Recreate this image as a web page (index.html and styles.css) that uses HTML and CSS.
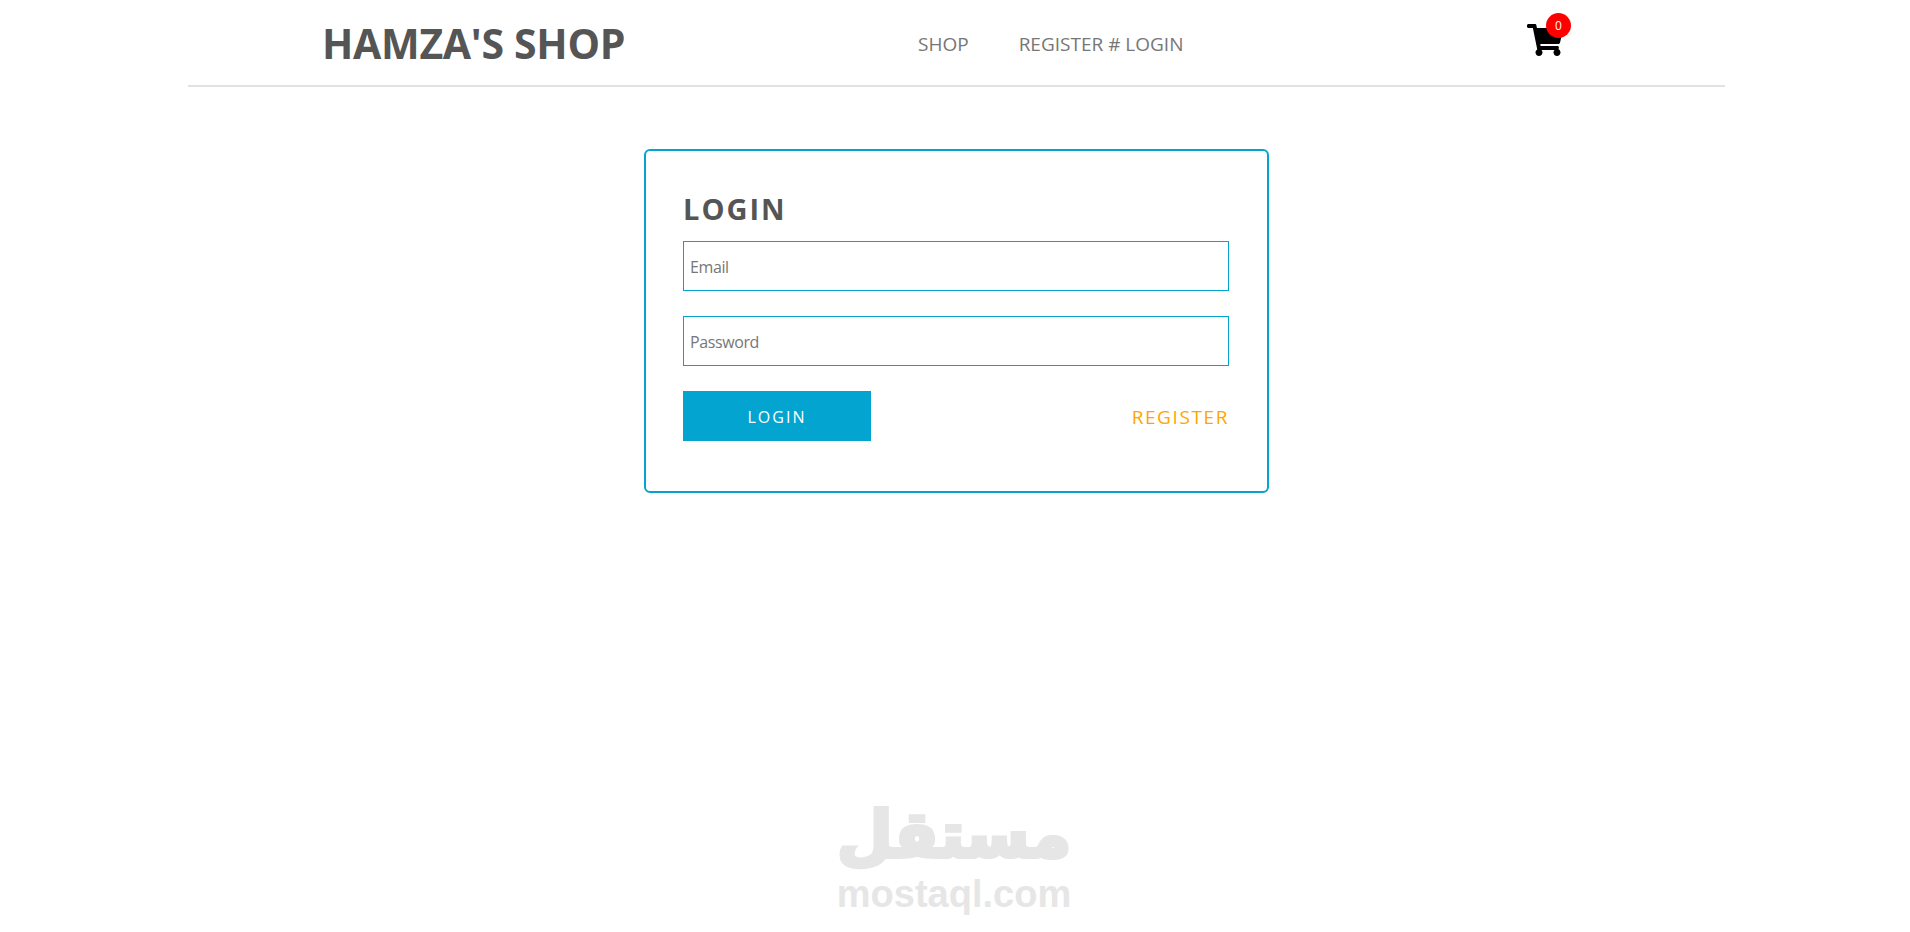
FILE: index.html
```html
<!DOCTYPE html>
<html lang="en">
  <head>
    <meta charset="UTF-8" />
    <meta name="viewport" content="width=device-width, initial-scale=1.0" />
    <title>Login | Hamza's Shop</title>
    <link rel="stylesheet" href="styles.css">
  </head>
  <body>
    <header class="header">
      <a class="logo" href="#">HAMZA'S SHOP</a>
      <nav class="nav">
        <a href="#">SHOP</a>
        <a href="#">REGISTER # LOGIN</a>
      </nav>
      <a class="cart" href="#">
        <svg class="cart-icon" viewBox="0 0 576 512" aria-hidden="true">
          <path d="M528.12 301.319l47.273-208C578.806 78.301 567.391 64 551.99 64H159.208l-9.166-44.81C147.758 8.021 137.93 0 126.529 0H24C10.745 0 0 10.745 0 24v16c0 13.255 10.745 24 24 24h69.883l70.248 343.435C147.325 417.1 136 435.222 136 456c0 30.928 25.072 56 56 56s56-25.072 56-56c0-15.674-6.447-29.835-16.824-40h209.647C430.447 426.165 424 440.326 424 456c0 30.928 25.072 56 56 56s56-25.072 56-56c0-22.172-12.888-41.332-31.579-50.405l5.517-24.276c3.413-15.018-8.002-29.319-23.403-29.319H218.117l-6.545-32h293.145c11.206 0 20.92-7.754 23.403-18.681z"/>
        </svg>
        <span class="badge">0</span>
      </a>
    </header>

    <main class="main">
      <form class="card">
        <h2>LOGIN</h2>
        <input type="email" placeholder="Email" />
        <input type="password" placeholder="Password" />
        <div class="actions">
          <button type="button" class="btn">LOGIN</button>
          <a class="register" href="#">REGISTER</a>
        </div>
      </form>
    </main>

    <div class="watermark">
      <span class="watermark-ar" lang="ar" dir="rtl">مستقل</span>
      <span class="watermark-en">mostaql.com</span>
    </div>
  </body>
</html>
```

FILE: styles.css
```css
* {
  margin: 0;
  padding: 0;
  box-sizing: border-box;
  font-family: "Open Sans", sans-serif;
}
body {
  background-color: #ffffff;
  color: #555555;
  height: 932px;
  overflow: hidden;
  position: relative;
}
a {
  text-decoration: none;
}
.header {
  margin-left: 188px;
  width: 1537px;
  height: 87px;
  padding-left: 134px;
  border-bottom: 2px solid #e2e2e2;
  display: flex;
  align-items: center;
}
.logo {
  width: 596px;
  font-size: 41px;
  font-weight: 700;
  color: #555555;
  letter-spacing: -0.3px;
}
.nav {
  width: 609px;
  padding-top: 2px;
  display: flex;
  gap: 50px;
}
.nav a {
  font-size: 19px;
  color: #777777;
}
.cart {
  position: relative;
  display: block;
  width: 36px;
  height: 32px;
  margin-top: -6px;
}
.cart-icon {
  display: block;
  width: 36px;
  height: 32px;
  fill: #000000;
}
.badge {
  position: absolute;
  top: -11px;
  left: 19px;
  width: 25px;
  height: 25px;
  border-radius: 50%;
  background: #ff0000;
  color: #ffffff;
  font-size: 12px;
  line-height: 25px;
  text-align: center;
}
.main {
  margin-left: 644px;
  padding-top: 62px;
}
.card {
  width: 625px;
  height: 344px;
  padding: 38px 38px 0 37px;
  border: 2px solid #03a5d0;
  border-radius: 6px;
  background: #ffffff;
}
.card h2 {
  font-size: 29px;
  line-height: 40px;
  font-weight: 700;
  letter-spacing: 2px;
  color: #555555;
  margin-bottom: 12px;
}
.card input {
  display: block;
  width: 100%;
  height: 50px;
  margin-bottom: 25px;
  padding: 2px 6px 0;
  border: 1px solid #03a5d0;
  border-radius: 0;
  font-size: 16px;
  letter-spacing: -0.4px;
  outline: none;
}
.card input::placeholder {
  color: #777777;
}
.actions {
  display: flex;
  justify-content: space-between;
  align-items: center;
}
.btn {
  width: 188px;
  height: 50px;
  padding-top: 2px;
  border: none;
  background: #03a5d0;
  color: #ffffff;
  font-size: 16px;
  letter-spacing: 2px;
  cursor: pointer;
}
.register {
  padding-top: 2px;
  font-size: 19px;
  letter-spacing: 1.6px;
  color: #ffa500;
}
.watermark {
  position: absolute;
  left: 836px;
  top: 798px;
  width: 236px;
  display: flex;
  flex-direction: column;
  align-items: center;
  color: #e6e6e6;
}
.watermark-ar {
  font-family: "DejaVu Sans", sans-serif;
  font-size: 64px;
  font-weight: 700;
  line-height: 75px;
  -webkit-text-stroke: 4px #e6e6e6;
}
.watermark-en {
  font-family: "Liberation Sans", sans-serif;
  font-size: 38px;
  font-weight: 700;
  line-height: 42px;
}
```
